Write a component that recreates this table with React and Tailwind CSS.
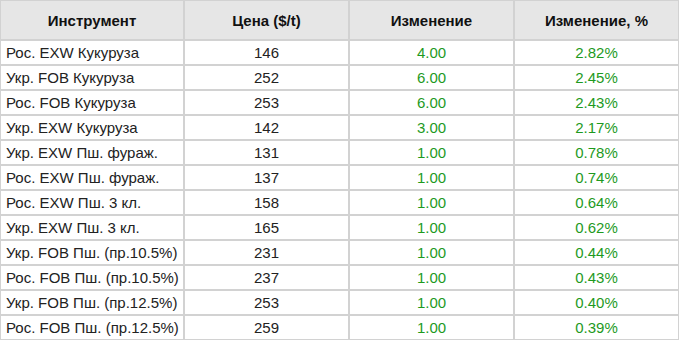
import React from 'react';

const rows = [
  ['Рос. EXW Кукуруза', '146', '4.00', '2.82%'],
  ['Укр. FOB Кукуруза', '252', '6.00', '2.45%'],
  ['Рос. FOB Кукуруза', '253', '6.00', '2.43%'],
  ['Укр. EXW Кукуруза', '142', '3.00', '2.17%'],
  ['Укр. EXW Пш. фураж.', '131', '1.00', '0.78%'],
  ['Рос. EXW Пш. фураж.', '137', '1.00', '0.74%'],
  ['Рос. EXW Пш. 3 кл.', '158', '1.00', '0.64%'],
  ['Укр. EXW Пш. 3 кл.', '165', '1.00', '0.62%'],
  ['Укр. FOB Пш. (пр.10.5%)', '231', '1.00', '0.44%'],
  ['Рос. FOB Пш. (пр.10.5%)', '237', '1.00', '0.43%'],
  ['Укр. FOB Пш. (пр.12.5%)', '253', '1.00', '0.40%'],
  ['Рос. FOB Пш. (пр.12.5%)', '259', '1.00', '0.39%'],
];

const App = () => {
  return (
    <div className="bg-white w-[680px] h-[340px] overflow-hidden font-['Liberation_Sans',Arial,sans-serif] text-[15px] leading-none text-[#222]">
      <table className="w-[679px] border-separate border-spacing-0 table-fixed">
        <colgroup>
          <col className="w-[184px]" />
          <col className="w-[165px]" />
          <col className="w-[165px]" />
          <col className="w-[165px]" />
        </colgroup>
        <thead>
          <tr className="h-[40px] bg-[#e6e6e6]">
            <th className="border border-[#d2d2d2] font-bold text-[#111] text-center">Инструмент</th>
            <th className="border border-[#d2d2d2] font-bold text-[#111] text-center">Цена ($/t)</th>
            <th className="border border-[#d2d2d2] font-bold text-[#111] text-center">Изменение</th>
            <th className="border border-[#d2d2d2] font-bold text-[#111] text-center">Изменение, %</th>
          </tr>
        </thead>
        <tbody>
          {rows.map((r) => (
            <tr key={r[0]} className="h-[25px]">
              <td className="border border-[#d2d2d2] pl-[5px] whitespace-nowrap">{r[0]}</td>
              <td className="border border-[#d2d2d2] text-center">{r[1]}</td>
              <td className="border border-[#d2d2d2] text-center text-[#1e9a1e]">{r[2]}</td>
              <td className="border border-[#d2d2d2] text-center text-[#1e9a1e]">{r[3]}</td>
            </tr>
          ))}
        </tbody>
      </table>
    </div>
  );
};

export default App;
